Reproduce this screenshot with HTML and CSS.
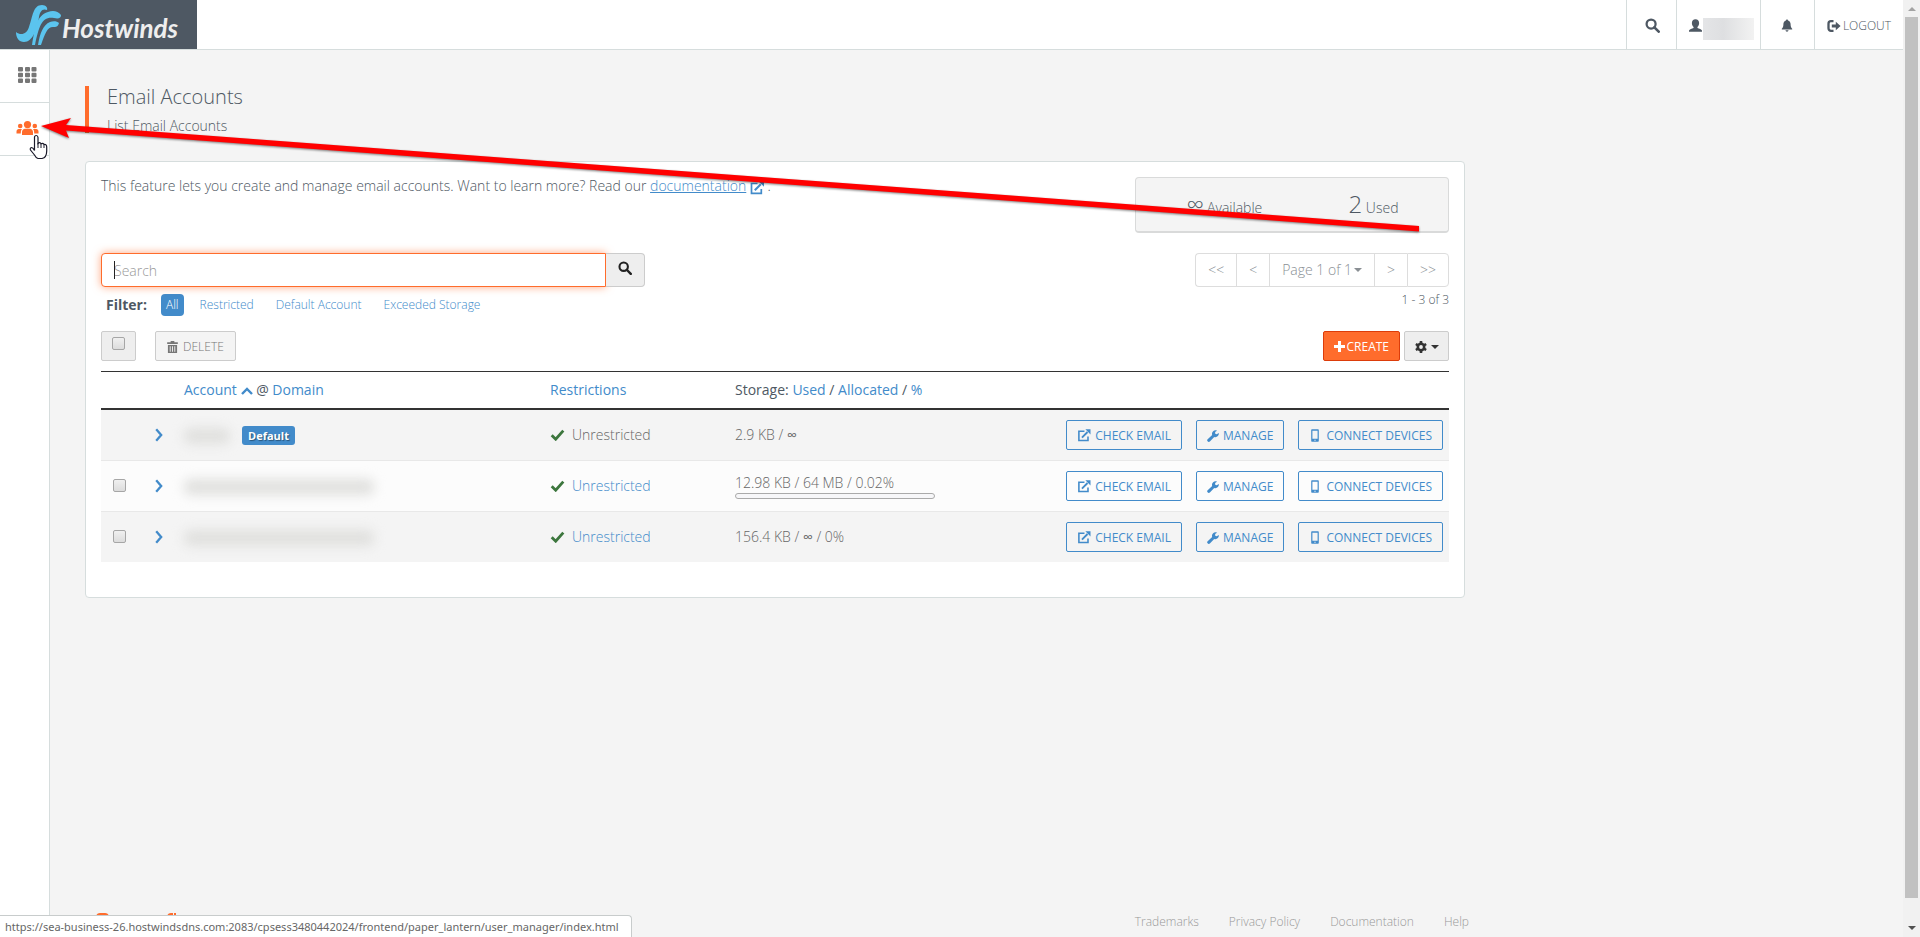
FILE: index.html
```html
<!DOCTYPE html>
<html lang="en">
<head>
    <meta charset="UTF-8">
    <meta name="viewport" content="width=device-width, initial-scale=1.0">
    <title>Email Accounts</title>
    <link rel="stylesheet" href="styles.css">
</head>
<body>
    <!-- icon sprite -->
    <svg class="sprite" aria-hidden="true">
        <symbol id="i-search" viewBox="0 0 16 16"><circle cx="6.5" cy="6.5" r="4.8" fill="none" stroke="currentColor" stroke-width="2.4"/><path d="M10 10l4.6 4.6" stroke="currentColor" stroke-width="2.8" stroke-linecap="round"/></symbol>
        <symbol id="i-user" viewBox="0 0 14 14"><path d="M7 .3c2.400 0 3.900 1.600 3.900 4.100 0 1.900-.7 3.300-1.800 4.200v1.100c1.700.6 4.400 1.200 4.900 2.800v1.300H0v-1.300c.5-1.600 3.200-2.200 4.900-2.800V8.600C3.800 7.700 3.100 6.300 3.100 4.400 3.100 1.900 4.600.3 7 .3z"/></symbol>
        <symbol id="i-bell" viewBox="0 0 12 14"><path d="M6 .6c.7 0 1.100.5 1.100 1.100C9 2.300 9.900 3.900 9.900 5.900c0 2.400.6 3.600 1.700 4.600v.9H.4v-.9c1.100-1 1.700-2.200 1.700-4.600 0-2 .9-3.600 2.800-4.200C4.900 1.100 5.300.6 6 .6zM4.400 12h3.200c0 .9-.7 1.600-1.600 1.600S4.400 12.900 4.400 12z"/></symbol>
        <symbol id="i-logout" viewBox="0 0 14 14"><path d="M6.500 2.200H4A2.500 2.500 0 0 0 1.500 4.700v4.600A2.500 2.500 0 0 0 4 11.800h2.500" fill="none" stroke="currentColor" stroke-width="2.300"/><path d="M4.800 5.400h4V2.800L13.600 7l-4.800 4.200V8.600h-4z"/></symbol>
        <symbol id="i-edit" viewBox="0 0 14 14"><path d="M7.500 2.500h-6v9.800h9.800V8" fill="none" stroke="currentColor" stroke-width="1.700"/><path d="M4.800 9.200l6-6" stroke="currentColor" stroke-width="2"/><path d="M8.500.3H14v5.500z"/></symbol>
        <symbol id="i-trash" viewBox="0 0 12 13"><path d="M4 0h4v1.300h3.800v2H.2v-2H4z"/><path fill-rule="evenodd" d="M1 4.200h10V13H1zM3 5.600v6h1v-6zm2.500 0v6h1v-6zm2.500 0v6h1v-6z"/></symbol>
        <symbol id="i-plus" viewBox="0 0 11 11"><path d="M4 0h3v4h4v3H7v4H4V7H0V4h4z"/></symbol>
        <symbol id="i-gear" viewBox="0 0 14 14"><circle cx="7" cy="7" r="3.700" fill="none" stroke="currentColor" stroke-width="3"/><path d="M7 0v3M7 11v3M1 3.500l2.500 1.500M10.500 9l2.500 1.500M1 10.500L3.500 9M10.500 5L13 3.500" stroke="currentColor" stroke-width="3"/></symbol>
        <symbol id="i-wrench" viewBox="0 0 13 13"><path d="M12.700 3.200L10.600 4.600 8.900 4l-.1-1.800L10.800.7C8.600-.4 5.600 1 5.400 3.900c0 .5 0 1 .2 1.400L.7 9.900c-1.700 1.700.8 4 2.400 2.500l4.700-4.900c3 1 5.600-1.500 4.900-4.300z"/></symbol>
        <symbol id="i-phone" viewBox="0 0 8 13"><path fill-rule="evenodd" d="M1.200.2h5.600c.6 0 1 .4 1 1v10.600c0 .6-.4 1-1 1H1.200c-.6 0-1-.4-1-1V1.200c0-.6.400-1 1-1zM1.400 1.800v8h5.200v-8zM3.400 10.700v1h1.200v-1z"/></symbol>
        <symbol id="i-check" viewBox="0 0 14 12"><path d="M1.200 6.200l4 4 7.600-8.600" fill="none" stroke="currentColor" stroke-width="2.800"/></symbol>
        <symbol id="i-right" viewBox="0 0 8 14"><path d="M1.200 1.200l5 5.800-5 5.800" fill="none" stroke="currentColor" stroke-width="2.300"/></symbol>
        <symbol id="i-up" viewBox="0 0 12 8"><path d="M1 7l5-5 5 5" fill="none" stroke="currentColor" stroke-width="2.400"/></symbol>
        <symbol id="i-caret" viewBox="0 0 8 4"><path d="M0 0h8L4 4z"/></symbol>
        <symbol id="i-grid" viewBox="0 0 19 16"><path d="M1 0h3q1 0 1 1v2.500q0 1-1 1H1q-1 0-1-1V1q0-1 1-1zm7 0h3q1 0 1 1v2.500q0 1-1 1H8q-1 0-1-1V1q0-1 1-1zm6.500 0h3q1 0 1 1v2.500q0 1-1 1h-3q-1 0-1-1V1q0-1 1-1zM1 5.800h3q1 0 1 1v2.500q0 1-1 1H1q-1 0-1-1V6.800q0-1 1-1zm7 0h3q1 0 1 1v2.500q0 1-1 1H8q-1 0-1-1V6.800q0-1 1-1zm6.500 0h3q1 0 1 1v2.500q0 1-1 1h-3q-1 0-1-1V6.800q0-1 1-1zM1 11.500h3q1 0 1 1V15q0 1-1 1H1q-1 0-1-1v-2.500q0-1 1-1zm7 0h3q1 0 1 1V15q0 1-1 1H8q-1 0-1-1v-2.500q0-1 1-1zm6.500 0h3q1 0 1 1V15q0 1-1 1h-3q-1 0-1-1v-2.500q0-1 1-1z"/></symbol>
        <symbol id="i-users" viewBox="0 0 22 14"><circle cx="11" cy="3.600" r="3.600"/><circle cx="3.700" cy="5" r="2.300"/><circle cx="18.300" cy="5" r="2.300"/><path d="M5.500 14v-3c0-2 1.500-3.300 3-3.300h5c1.500 0 3 1.300 3 3.300v3zM0 12.400v-2C0 8.800 1 7.900 2.300 7.900h3.200c-.9.900-1.200 2-1.200 4.500zM22 12.400v-2c0-1.600-1-2.500-2.300-2.500h-3.200c.9.900 1.200 2 1.200 4.500z"/></symbol>
    </svg>

    <header class="topbar">
        <a class="logo" href="#">
            <svg width="46" height="42" viewBox="0 0 46 42" aria-hidden="true">
                <g fill="#5bc4ee">
                    <path d="M0 28c5 4 11 2 13-5C17 12 17 1 26 1c4 0 6 3 5 5-5-2-7 2-8 7-2 12-6 25-15 25C3 38 0 34 0 28z"/>
                    <path d="M16 41C19 24 20 12 32 8c5-2 10-1 13 3 0 3-2 4-7 3-12-2-15 8-19 27z"/>
                    <path d="M22 41c2-12 5-20 12-23 3-1 7-1 9 1-1 4-3 4-6 4-6 0-8 7-12 18z"/>
                </g>
            </svg>
            <span>Hostwinds</span>
        </a>
        <nav class="topnav">
            <button class="nav-search" aria-label="Search"><svg class="icon" width="15" height="15"><use href="#i-search"/></svg></button>
            <button class="nav-user" aria-label="User"><svg class="icon" width="13" height="13"><use href="#i-user"/></svg><span class="redacted"></span></button>
            <button class="nav-bell" aria-label="Notifications"><svg class="icon" width="12" height="13"><use href="#i-bell"/></svg></button>
            <a class="nav-logout" href="#"><svg class="icon" width="14" height="14"><use href="#i-logout"/></svg>LOGOUT</a>
        </nav>
    </header>

    <div class="shell">
        <aside class="sidebar">
            <a href="#" aria-label="Home"><svg class="icon" width="19" height="16"><use href="#i-grid"/></svg></a>
            <a class="active" href="#" aria-label="User Manager"><svg class="icon" width="23" height="14"><use href="#i-users"/></svg></a>
        </aside>

        <main class="content">
            <div class="page-title">
                <h1>Email Accounts</h1>
                <p>List Email Accounts</p>
            </div>

            <section class="card">
                <div class="intro">
                    <p>This feature lets you create and manage email accounts. Want to learn more? Read our <a href="#">documentation</a> <svg class="icon doc-icon" width="14" height="14"><use href="#i-edit"/></svg> .</p>
                    <div class="stats">
                        <div><strong>∞</strong> Available</div>
                        <div><strong>2</strong> Used</div>
                    </div>
                </div>

                <div class="controls">
                    <div class="finder">
                        <form class="search">
                            <input type="text" placeholder="Search" aria-label="Search">
                            <button type="button" aria-label="Search"><svg class="icon" width="14" height="14"><use href="#i-search"/></svg></button>
                        </form>
                        <div class="filter">
                            <strong>Filter:</strong>
                            <a class="on" href="#">All</a>
                            <a href="#">Restricted</a>
                            <a href="#">Default Account</a>
                            <a href="#">Exceeded Storage</a>
                        </div>
                    </div>
                    <div class="paging">
                        <div class="pager">
                            <button>&lt;&lt;</button>
                            <button>&lt;</button>
                            <button>Page 1 of 1<svg class="icon" width="8" height="4"><use href="#i-caret"/></svg></button>
                            <button>&gt;</button>
                            <button>&gt;&gt;</button>
                        </div>
                        <p>1 - 3 of 3</p>
                    </div>
                </div>

                <div class="toolbar">
                    <label class="check-all"><input type="checkbox" aria-label="Select all"></label>
                    <button class="btn delete"><svg class="icon" width="11" height="12"><use href="#i-trash"/></svg>DELETE</button>
                    <button class="btn create"><svg class="icon" width="11" height="11"><use href="#i-plus"/></svg>CREATE</button>
                    <button class="btn gear" aria-label="Settings"><svg class="icon" width="12" height="12"><use href="#i-gear"/></svg><svg class="icon" width="8" height="4"><use href="#i-caret"/></svg></button>
                </div>

                <table class="accounts">
                    <colgroup>
                        <col class="col-check"><col class="col-open"><col class="col-account"><col class="col-restrict"><col class="col-storage"><col>
                    </colgroup>
                    <thead>
                        <tr>
                            <th></th>
                            <th></th>
                            <th><a href="#">Account <svg class="icon" width="12" height="8"><use href="#i-up"/></svg></a> @ <a href="#">Domain</a></th>
                            <th><a href="#">Restrictions</a></th>
                            <th>Storage: <a href="#">Used</a> / <a href="#">Allocated</a> / <a href="#">%</a></th>
                            <th></th>
                        </tr>
                    </thead>
                    <tbody>
                        <tr>
                            <td></td>
                            <td><a href="#" aria-label="Expand"><svg class="icon" width="8" height="14"><use href="#i-right"/></svg></a></td>
                            <td><span class="name short"></span><span class="badge">Default</span></td>
                            <td><svg class="icon tick" width="15" height="12"><use href="#i-check"/></svg>Unrestricted</td>
                            <td>2.9 KB / <b>∞</b></td>
                            <td class="actions">
                                <div>
                                    <button class="btn"><svg class="icon" width="14" height="13"><use href="#i-edit"/></svg>CHECK EMAIL</button>
                                    <button class="btn"><svg class="icon" width="12" height="12"><use href="#i-wrench"/></svg>MANAGE</button>
                                    <button class="btn device"><svg class="icon" width="8" height="13"><use href="#i-phone"/></svg>CONNECT DEVICES</button>
                                </div>
                            </td>
                        </tr>
                        <tr>
                            <td><input type="checkbox" aria-label="Select account"></td>
                            <td><a href="#" aria-label="Expand"><svg class="icon" width="8" height="14"><use href="#i-right"/></svg></a></td>
                            <td><span class="name"></span></td>
                            <td><svg class="icon tick" width="15" height="12"><use href="#i-check"/></svg><a href="#">Unrestricted</a></td>
                            <td>12.98 KB / 64 MB / 0.02%<div class="meter"></div></td>
                            <td class="actions">
                                <div>
                                    <button class="btn"><svg class="icon" width="14" height="13"><use href="#i-edit"/></svg>CHECK EMAIL</button>
                                    <button class="btn"><svg class="icon" width="12" height="12"><use href="#i-wrench"/></svg>MANAGE</button>
                                    <button class="btn device"><svg class="icon" width="8" height="13"><use href="#i-phone"/></svg>CONNECT DEVICES</button>
                                </div>
                            </td>
                        </tr>
                        <tr>
                            <td><input type="checkbox" aria-label="Select account"></td>
                            <td><a href="#" aria-label="Expand"><svg class="icon" width="8" height="14"><use href="#i-right"/></svg></a></td>
                            <td><span class="name"></span></td>
                            <td><svg class="icon tick" width="15" height="12"><use href="#i-check"/></svg><a href="#">Unrestricted</a></td>
                            <td>156.4 KB / <b>∞</b> / 0%</td>
                            <td class="actions">
                                <div>
                                    <button class="btn"><svg class="icon" width="14" height="13"><use href="#i-edit"/></svg>CHECK EMAIL</button>
                                    <button class="btn"><svg class="icon" width="12" height="12"><use href="#i-wrench"/></svg>MANAGE</button>
                                    <button class="btn device"><svg class="icon" width="8" height="13"><use href="#i-phone"/></svg>CONNECT DEVICES</button>
                                </div>
                            </td>
                        </tr>
                    </tbody>
                </table>
            </section>

            <footer class="footer">
                <svg class="brand" width="96" height="20" viewBox="0 0 96 20" aria-hidden="true"><path d="M7 3q1-3 4-3h5q3 0 4 3v3H7zM78 3q1-3 4-3h2v6h-6zM85 0h2v6h-2z" fill="#ff6c2c"/></svg>
                <nav>
                    <a href="#">Trademarks</a>
                    <a href="#">Privacy Policy</a>
                    <a href="#">Documentation</a>
                    <a href="#">Help</a>
                </nav>
            </footer>
        </main>
    </div>

    <div class="scrollbar" aria-hidden="true">
        <svg width="8" height="4" viewBox="0 0 8 4"><path d="M0 4l4-4 4 4z" fill="#a3a3a3"/></svg>
        <div class="thumb"></div>
        <svg width="8" height="4" viewBox="0 0 8 4"><path d="M0 0h8L4 4z" fill="#505050"/></svg>
    </div>

    <div class="status">https://sea-business-26.hostwindsdns.com:2083/cpsess3480442024/frontend/paper_lantern/user_manager/index.html</div>

    <!-- pointer and arrow drawn over the page -->
    <svg class="overlay" width="1430" height="240" viewBox="0 0 1430 240" aria-hidden="true">
        <path class="arrow" d="M41 126l30-8-5 7 1353 101v5.500L66 130.500l3 7.500z"/>
        <path d="M34.500 150.500v-13q0-2 1.700-2t1.800 2v6q2-1.800 3 .3 2-1 3 .7 2.700-.5 2.700 2.500v4q0 6.500-4.700 7.500h-4q-2-.5-3.500-3.500l-4-5q-.8-2 1-2.500 1.500 0 3 3z" fill="#fff" stroke="#1a1a2a" stroke-width="1.200"/>
        <path d="M38 143v5M41 144v4M44 145v3" stroke="#1a1a2a" fill="none"/>
    </svg>
</body>
</html>
```
FILE: styles.css
```css
* {
    box-sizing: border-box;
}

body {
    margin: 0;
    font-family: "Open Sans", "Noto Sans", sans-serif;
    font-size: 14px;
    font-weight: 300;
    line-height: 20px;
    color: #4e5863;
    background: #f4f4f4;
    min-height: 100vh;
    display: flex;
    flex-direction: column;
    padding-right: 17px;
    overflow: hidden;
}

h1, p {
    margin: 0;
    font-weight: 300;
}

a {
    color: #428bca;
    text-decoration: none;
}

button, input {
    font: inherit;
    margin: 0;
}

.sprite {
    display: none;
}

.icon {
    fill: currentColor;
    flex: none;
}

/* top bar */
.topbar {
    display: flex;
    justify-content: space-between;
    height: 50px;
    background: #fff;
    border-bottom: 1px solid #d6dddd;
}

.logo {
    display: flex;
    align-items: center;
    width: 197px;
    padding-left: 16px;
    background: #4e5863;
    color: #eee;
    font-family: Lato, sans-serif;
    font-size: 26px;
    font-weight: 700;
    font-style: italic;
}

.logo span {
    padding-top: 6px;
}

.topnav {
    display: flex;
}

.topnav > * {
    display: flex;
    align-items: center;
    justify-content: center;
    gap: 1px;
    padding: 2px 0 0;
    border: 0;
    border-left: 1px solid #d6dddd;
    background: #fff;
    color: #4e5863;
    font-size: 12px;
}

.topnav .nav-search {
    width: 50px;
    padding-left: 2px;
}

.topnav .nav-user {
    width: 84px;
    padding-left: 6px;
}

.topnav .nav-bell {
    width: 54px;
    padding-right: 2px;
}

.topnav .nav-logout {
    width: 89px;
    gap: 2px;
}

.redacted {
    width: 51px;
    height: 22px;
    margin-top: 6px;
    background: linear-gradient(90deg, #e4e5e7, #dedfe1 40%, #f2f2f2);
}

/* layout */
.shell {
    display: flex;
    flex: 1;
}

.sidebar {
    width: 50px;
    flex: none;
    background: #fff;
    border-right: 1px solid #d6dddd;
}

.sidebar a {
    display: flex;
    align-items: center;
    justify-content: center;
    height: 53px;
    padding: 0 0 2px 6px;
    border-bottom: 1px solid #d6dddd;
    color: #777;
}

.sidebar .active {
    color: #ff6c2c;
}

.content {
    flex: 1;
    max-width: 1420px;
    padding: 36px 5px 0 35px;
    display: flex;
    flex-direction: column;
}

.page-title {
    height: 47px;
    margin-bottom: 28px;
    padding-left: 18px;
    border-left: 4px solid #ff6c2c;
}

.page-title h1 {
    font-size: 20px;
    line-height: 22px;
    margin-bottom: 8px;
}

.card {
    background: #fff;
    border: 1px solid #d6dddd;
    border-radius: 4px;
    padding: 15px 15px 35px;
}

.intro {
    display: flex;
    justify-content: space-between;
    margin-bottom: 20px;
}

.intro a {
    text-decoration: underline;
}

.intro p {
    line-height: 18px;
}

.doc-icon {
    color: #428bca;
    vertical-align: -4px;
}

.stats {
    display: flex;
    width: 314px;
    height: 56px;
    padding-left: 14px;
    background: #f4f4f4;
    border: 1px solid #d9dada;
    border-bottom-width: 2px;
    border-radius: 4px;
}

.stats div {
    flex: 1;
    text-align: center;
    line-height: 52px;
}

.stats strong {
    font-size: 24px;
    font-weight: 300;
}

.controls {
    display: flex;
    justify-content: space-between;
    margin-bottom: 15px;
}

.search {
    position: relative;
    display: flex;
    width: 544px;
    margin-bottom: 7px;
}

/* text cursor */
.search::before {
    content: "";
    position: absolute;
    top: 8px;
    left: 13px;
    width: 1px;
    height: 18px;
    background: #222;
}

.search input {
    flex: 1;
    height: 34px;
    padding: 0 12px;
    border: 1px solid #ff6c2c;
    border-radius: 4px 0 0 4px;
    outline: none;
    box-shadow: 0 0 8px rgba(255, 108, 44, 0.6);
}

.search input::placeholder {
    color: #999;
}

.search button {
    width: 39px;
    height: 34px;
    padding: 0;
    border: 1px solid #ccc;
    border-left: 0;
    border-radius: 0 4px 4px 0;
    background: #eee;
    color: #222;
}

.filter {
    display: flex;
    align-items: center;
    gap: 10px;
    padding-left: 5px;
    font-size: 12px;
}

.filter strong {
    font-size: 14px;
    font-weight: 700;
    margin-right: 4px;
}

.filter a {
    padding: 1px 6px;
}

.filter .on {
    padding: 1px 5px;
    border-radius: 4px;
    background: #428bca;
    color: #fff;
}

.paging {
    text-align: right;
    font-size: 12px;
}

.paging p {
    margin-top: 3px;
}

.pager {
    display: flex;
    font-size: 14px;
}

.pager button {
    height: 34px;
    padding: 0 12px;
    border: 1px solid #ddd;
    border-right-width: 0;
    background: #fff;
    color: #8a8f94;
    display: flex;
    align-items: center;
    gap: 2px;
}

.pager button:first-child {
    border-radius: 4px 0 0 4px;
}

.pager button:last-child {
    border-right-width: 1px;
    border-radius: 0 4px 4px 0;
}

.toolbar {
    display: flex;
    margin-bottom: 10px;
}

.btn {
    display: flex;
    align-items: center;
    justify-content: center;
    gap: 4px;
    height: 30px;
    padding: 1px 10px 0;
    border: 1px solid #428bca;
    border-radius: 2px;
    background: transparent;
    color: #428bca;
    font-size: 12px;
    font-weight: 400;
}

.check-all {
    width: 35px;
    height: 30px;
    padding-top: 5px;
    border: 1px solid #ccc;
    border-radius: 2px;
    background: #eee;
    display: flex;
    justify-content: center;
    align-items: flex-start;
}

input[type="checkbox"] {
    appearance: none;
    display: block;
    width: 13px;
    height: 13px;
    border: 1px solid #a6a6a6;
    border-radius: 2px;
    background: linear-gradient(#f0f0f0, #dcdcdc);
}

.delete {
    margin-left: 19px;
    margin-right: auto;
    padding: 1px 11px 0;
    gap: 5px;
    border-color: #ccc;
    background: #f4f4f4;
    color: #777;
    font-weight: 300;
}

.create {
    margin-right: 4px;
    border-color: #dc3c0a;
    background: #ff6c2c;
    color: #fff;
    gap: 2px;
}

.gear {
    border-color: #ccc;
    background: #eee;
    color: #333;
    width: 45px;
}

/* accounts table */
.accounts {
    width: 100%;
    table-layout: fixed;
    border-collapse: separate;
    border-spacing: 0;
}

.col-check {
    width: 50px;
}

.col-open {
    width: 33px;
}

.col-account {
    width: 366px;
}

.col-restrict {
    width: 185px;
}

.col-storage {
    width: 260px;
}

.accounts th {
    height: 39px;
    padding: 0;
    border-top: 1px solid #333;
    border-bottom: 2px solid #333;
    text-align: left;
    font-weight: 400;
}

.accounts td {
    height: 51px;
    padding: 0;
    border-bottom: 1px solid #e8e8e8;
    background: #f4f4f4;
    color: #666;
}

.accounts tr:nth-child(even) td {
    background: #fcfcfc;
}

.accounts tr:last-child td {
    height: 50px;
    border-bottom: 0;
}

.accounts td:first-child {
    padding: 0 0 2px 12px;
}

.accounts td:nth-child(2) {
    padding-left: 4px;
    line-height: 0;
}

.accounts b {
    font-weight: 400;
}

.tick {
    color: #3c763d;
    margin-right: 7px;
    vertical-align: -1px;
}

.name {
    display: inline-block;
    width: 190px;
    height: 16px;
    border-radius: 6px;
    background: #e0e0de;
    filter: blur(6px);
    vertical-align: middle;
}

.name.short {
    width: 46px;
    margin-right: 12px;
}

.badge {
    display: inline-block;
    padding: 0 6px;
    border-radius: 3px;
    background: #428bca;
    color: #fff;
    font-size: 11px;
    font-weight: 700;
    line-height: 19px;
    text-shadow: 1px 1px 1px rgba(0, 0, 0, 0.4);
    vertical-align: middle;
}

.meter {
    width: 200px;
    height: 6px;
    border: 1px solid #aaa;
    border-radius: 3px;
    background: #f7f7f9;
}

.actions > div {
    display: flex;
    justify-content: flex-end;
    gap: 14px;
    padding-right: 6px;
}

.device {
    gap: 7px;
    padding: 1px 10px 0 12px;
}

/* footer */
.footer {
    display: flex;
    justify-content: space-between;
    align-items: flex-start;
    margin: auto -4px 0 0;
    height: 25px;
    font-size: 12px;
}

.footer .brand {
    margin: 1px 0 0 4px;
}

.footer nav {
    display: flex;
    gap: 30px;
}

.footer nav a {
    color: #999;
}

/* browser chrome over the page */
.scrollbar {
    position: fixed;
    top: 0;
    right: 0;
    bottom: 0;
    width: 17px;
    padding: 7px 2px;
    background: #f1f1f1;
    display: flex;
    flex-direction: column;
    align-items: center;
}

.thumb {
    flex: 1;
    width: 13px;
    margin: 6px 0 28px;
    background: #c1c1c1;
}

.status {
    position: fixed;
    left: 0;
    bottom: 0;
    padding: 1px 12px 0 5px;
    border-top: 1px solid #c8cccc;
    border-right: 1px solid #c8cccc;
    border-radius: 0 4px 0 0;
    background: #fff;
    color: #666;
    font-family: "Noto Sans", sans-serif;
    font-size: 11px;
    font-weight: 400;
}

.overlay {
    position: absolute;
    top: 0;
    left: 0;
    pointer-events: none;
}

.arrow {
    fill: #f00;
    filter: drop-shadow(0 1px 1px rgba(0, 0, 0, 0.5));
}
```
